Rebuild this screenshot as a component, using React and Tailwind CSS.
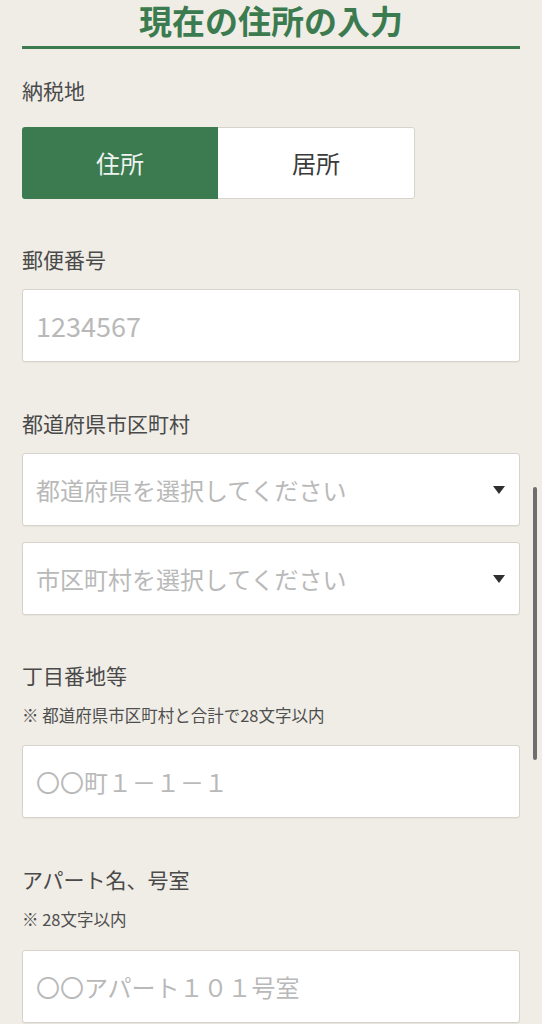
import React from "react";

const fieldBox =
  "h-[73px] w-full rounded-[3px] border border-[#d6d3cc] bg-white shadow-[0_1px_1px_rgba(0,0,0,0.04)]";

function Label({ children, className = "" }) {
  return (
    <p className={`text-[21px] leading-[30px] text-[#4a4a4a] ${className}`}>
      {children}
    </p>
  );
}

function Note({ children }) {
  return (
    <p className="mt-[14px] text-[16.5px] leading-[22px] text-[#4f4f4f]">
      {children}
    </p>
  );
}

function TextField({ placeholder, className = "" }) {
  return (
    <input
      type="text"
      placeholder={placeholder}
      className={`${fieldBox} block px-[13px] text-[#333] outline-none placeholder:text-[#b9b9b9] ${className}`}
    />
  );
}

function SelectField({ placeholder, className = "" }) {
  return (
    <div className={`${fieldBox} flex items-center justify-between pl-[13px] pr-[14px] ${className}`}>
      <span className="text-[24px] text-[#b9b9b9]">{placeholder}</span>
      <svg width="12" height="8" viewBox="0 0 12 8" className="shrink-0">
        <path d="M0 0 L12 0 L6 8 Z" fill="#2f2f2f" />
      </svg>
    </div>
  );
}

export default function App() {
  return (
    <div className="relative h-[1024px] overflow-hidden bg-[#f0ede6] font-['Noto_Sans_CJK_JP',sans-serif]">
      <div className="px-[22px]">
        <h1 className="border-b-[3px] border-[#3b7b4f] pb-[6px] text-center text-[33px] font-bold leading-[40px] text-[#3b7b4f]">
          現在の住所の入力
        </h1>

        <Label className="mt-[26px]">納税地</Label>
        <div className="mt-[22px] flex h-[72px] w-[393px] overflow-hidden rounded-[3px]">
          <button className="flex-1 bg-[#3b7b4f] text-[24px] text-[#eef3ef]">
            住所
          </button>
          <button className="flex-1 rounded-r-[3px] border border-l-0 border-[#d6d3cc] bg-white text-[24px] text-[#3a3a3a]">
            居所
          </button>
        </div>

        <Label className="mt-[45px]">郵便番号</Label>
        <TextField placeholder="1234567" className="mt-[15px] text-[27px]" />

        <Label className="mt-[46px]">都道府県市区町村</Label>
        <SelectField placeholder="都道府県を選択してください" className="mt-[15px]" />
        <SelectField placeholder="市区町村を選択してください" className="mt-[16px]" />

        <Label className="mt-[45px]">丁目番地等</Label>
        <Note>※ 都道府県市区町村と合計で28文字以内</Note>
        <TextField placeholder="〇〇町１－１－１" className="mt-[19px] text-[24px]" />

        <Label className="mt-[46px]">アパート名、号室</Label>
        <Note>※ 28文字以内</Note>
        <TextField placeholder="〇〇アパート１０１号室" className="mt-[20px] text-[24px]" />
      </div>

      {/* overlay scrollbar */}
      <div className="absolute right-[5px] top-[487px] h-[273px] w-[4px] rounded-full bg-[#6e6e6e]" />
    </div>
  );
}
